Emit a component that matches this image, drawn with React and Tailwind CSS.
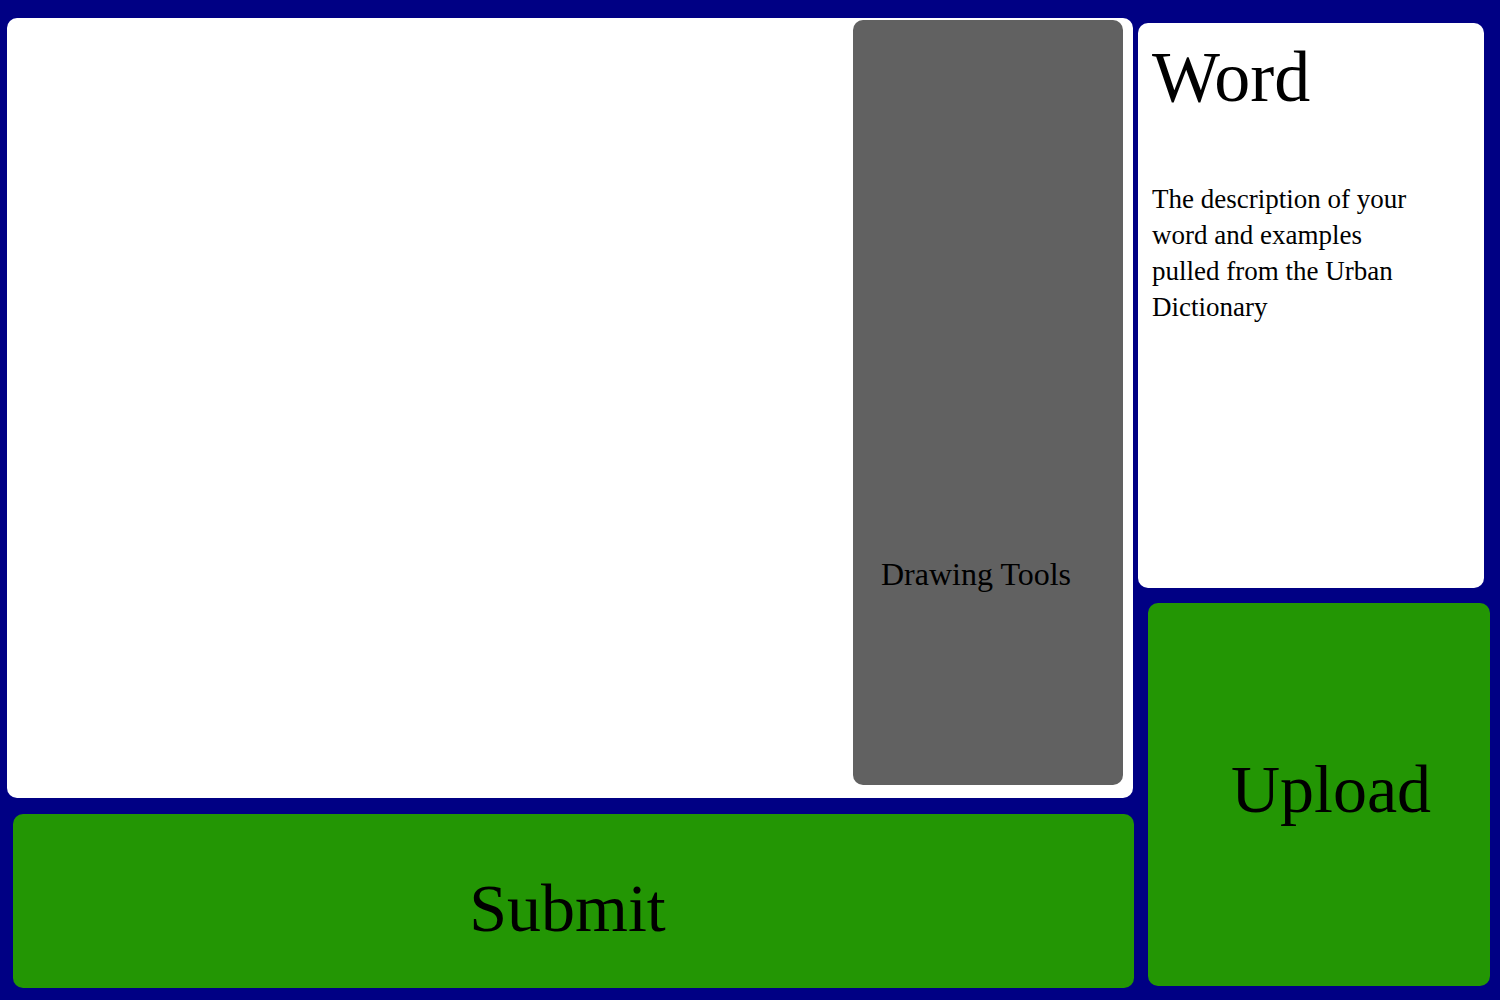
function DrawingArea() {
  return (
    <section
      aria-label="Canvas"
      className="mr-px flex flex-1 justify-end rounded-[10px] bg-white pt-0.5 pr-2.5 pb-[13px]"
    >
      <aside className="flex w-[270px] flex-col justify-end rounded-[10px] bg-[#616161] pb-[193px] pl-7">
        <h2 className="text-[32px] leading-9">Drawing Tools</h2>
      </aside>
    </section>
  );
}

function WordCard() {
  return (
    <article className="mr-1.5 flex-1 rounded-[10px] bg-white pt-3.5 pr-14 pl-3.5">
      <h1 className="text-[72px] leading-[80px]">Word</h1>
      <p className="mt-16 text-[27px] leading-9">
        The description of your word and examples pulled from the Urban
        Dictionary
      </p>
    </article>
  );
}

export default function App() {
  return (
    <div className="flex min-h-screen gap-1 bg-[#000084] pr-2.5 pl-[7px] font-['Liberation_Serif',serif] text-black">
      <main className="flex flex-1 flex-col gap-4 pt-[18px] pb-3">
        <DrawingArea />
        <button
          type="button"
          className="ml-1.5 h-[174px] rounded-[10px] bg-[#239604] pt-3.5 pr-3 text-[68px] leading-[80px]"
        >
          Submit
        </button>
      </main>
      <div className="flex w-[352px] flex-col gap-[15px] pt-[23px] pb-3.5">
        <WordCard />
        <button
          type="button"
          className="ml-2.5 h-[383px] rounded-[10px] bg-[#239604] pb-3 pl-6 text-[68px] leading-[80px]"
        >
          Upload
        </button>
      </div>
    </div>
  );
}
